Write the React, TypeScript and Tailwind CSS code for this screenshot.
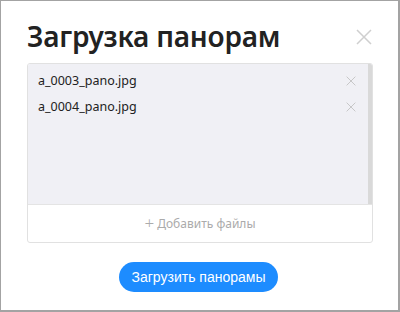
import React from "react";

function XIcon({ size, stroke, color }: { size: number; stroke: number; color: string }) {
  return (
    <svg width={size} height={size} viewBox="0 0 16 16" fill="none">
      <path d="M1 1L15 15M15 1L1 15" stroke={color} strokeWidth={stroke} />
    </svg>
  );
}

export default function App() {
  const files = ["a_0003_pano.jpg", "a_0004_pano.jpg"];
  return (
    <div className="w-[400px] h-[312px] bg-white border border-r-2 border-b-2 border-[#a3a3a3] box-border flex flex-col px-[26px]" style={{ fontFamily: '"Noto Sans", "Open Sans", sans-serif' }}>
      <div className="flex items-center justify-between h-[48px] mt-[11px]">
        <h1 className="text-[28px] font-semibold text-[#222] leading-none tracking-[-0.2px]">Загрузка панорам</h1>
        <div className="mr-[0px] mt-[2px]">
          <XIcon size={16} stroke={1.5} color="#cfcfcf" />
        </div>
      </div>
      <div className="mt-[3px] w-[346px] h-[180px] border border-[#e1e1e1] rounded-[3px] flex flex-col overflow-hidden">
        <div className="flex-1 bg-[#f0f0f5] flex">
          <div className="flex-1 flex flex-col pt-[4px] pl-[10px] pr-[12px]">
            {files.map((f) => (
              <div key={f} className="flex items-center justify-between h-[26px]">
                <span className="text-[12.5px] text-[#222]">{f}</span>
                <XIcon size={10} stroke={1.5} color="#c4c4c4" />
              </div>
            ))}
          </div>
          <div className="w-[4px] bg-[#d9d9d9]" />
        </div>
        <div className="h-[38px] border-t border-[#e4e4e4] flex items-center justify-center text-[12px] text-[#ababab] gap-[3px]">
          <span className="text-[17px] font-light leading-none -mt-[2px]">+</span>
          <span>Добавить файлы</span>
        </div>
      </div>
      <div className="flex justify-center mt-[19px]">
        <button className="h-[30px] px-[13px] rounded-full bg-[#1d8cff] text-white text-[14px] ml-[-2px]" style={{ fontFamily: '"Liberation Sans", Arial, sans-serif' }}>
          Загрузить панорамы
        </button>
      </div>
    </div>
  );
}
